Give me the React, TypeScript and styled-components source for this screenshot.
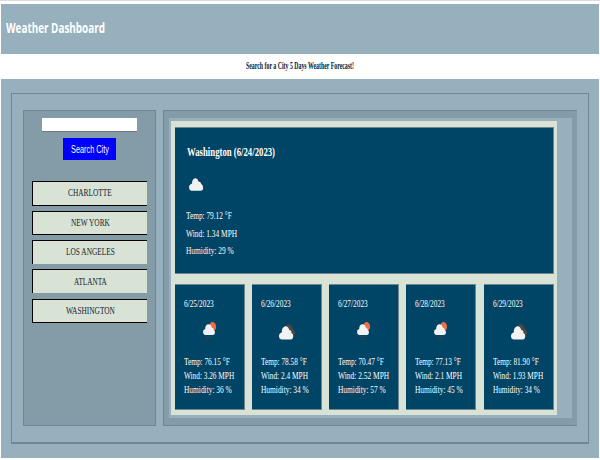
import React, { useLayoutEffect, useRef, useState } from "react";
import styled, { createGlobalStyle } from "styled-components";

const Global = createGlobalStyle`
  * { box-sizing: border-box; }
  body { margin: 0; background: #fff; font-family: "Liberation Serif", "Times New Roman", serif; }
`;

const Page = styled.div`
  width: 600px;
  height: 460px;
  padding: 3px 1px 2px;
  border-top: 1px solid #dcdce0;
  overflow: hidden;
`;
const Header = styled.header`
  height: 50px;
  background: #96b0be;
  padding: 15px 0 0 5px;
  color: #fff;
`;
const Tagline = styled.div`
  height: 25px;
  padding: 6px 0 0 245px;
  color: #00243c;
`;
const Main = styled.main`
  height: 379px;
  background: #96b0be;
  padding: 14px 10px;
`;
const Frame = styled.div`
  height: 351px;
  border: 1px solid #6f8793;
  border-bottom-width: 2px;
  padding: 16px 11px 16px;
  display: flex;
  gap: 7px;
`;
const Sidebar = styled.aside`
  width: 133px;
  height: 316px;
  background: #849ca8;
  border: 1px solid #6f8793;
  padding: 7px 8px 0;
`;
const Results = styled.section`
  width: 414px;
  height: 316px;
  background: #849ca8;
  border: solid #6f8793;
  border-width: 1px 0 1px 1px;
  padding: 7px 5px 7px 5px;
`;
const ResultsInner = styled.div`
  height: 300px;
  background: #96b0be;
  padding: 3px 15px 3px 2px;
`;
const Board = styled.div`
  height: 294px;
  background: #d8e3d6;
  padding: 6px 3px 5px 4px;
`;
const Panel = styled.article`
  background: #004466;
  border: solid #6f8793;
  border-width: 1px 1px 1px 0;
`;
const Today = styled(Panel)`
  height: 147px;
  padding: 16px 0 0 11px;
`;
const TodayTitle = styled.div`
  padding-left: 1px;
`;
const TodayIcon = styled.div`
  height: 47px;
  padding: 18px 0 0 3px;
`;
const Forecast = styled.div`
  display: grid;
  grid-template-columns: 70px 70px 70px 70px 71px;
  column-gap: 7px;
  margin-top: 10px;
`;
const Day = styled(Panel)`
  width: 70px;
  height: 126px;
  justify-self: end;
  padding: 12px 0 0 9px;
`;
const DayIcon = styled.div<{ $rain: boolean }>`
  height: 44px;
  padding: ${(p) => (p.$rain ? "11px 0 0 19px" : "13px 0 0 18px")};
`;
const Input = styled.input`
  display: block;
  width: 95px;
  height: 14px;
  margin: 0 0 6px 10px;
  padding: 0 4px;
  border: 0;
  border-bottom: 1px solid #6f7780;
  border-radius: 0;
  background: #fff;
  outline: none;
`;
const SearchButton = styled.button`
  display: flex;
  width: 53px;
  height: 22px;
  margin: 0 0 21px 31px;
  padding: 3px 0 0 8px;
  border: 0;
  background: #0000ff;
  color: #fff;
`;
const Cities = styled.div`
  display: grid;
  grid-template-rows: 25px 24px 24px 25px 24px;
  row-gap: 5px;
  align-items: start;
`;
const City = styled.button<{ $open: boolean; $h: number; $top: number }>`
  display: flex;
  justify-content: center;
  width: 115px;
  height: ${(p) => p.$h}px;
  padding: ${(p) => p.$top}px 0 0;
  border: solid #000;
  border-width: ${(p) => (p.$open ? "1px 0 0 1px" : "1px 0 1px 1px")};
  background: #d8e3d6;
  color: #17242e;
`;
const Box = styled.span<{ $w: number; $h: number; $size: number; $bold?: boolean; $sans?: string }>`
  display: block;
  width: ${(p) => p.$w}px;
  height: ${(p) => p.$h}px;
  line-height: ${(p) => p.$h}px;
  font-size: ${(p) => p.$size}px;
  font-weight: ${(p) => (p.$bold ? 700 : 400)};
  font-family: ${(p) => (p.$sans ? `"${p.$sans}", sans-serif` : `"Liberation Serif", serif`)};
  white-space: nowrap;
`;
const Glyphs = styled.span`
  display: inline-block;
  transform-origin: 0 50%;
`;
const Stats = styled.div`
  color: #fff;
`;

type TextProps = { text: string; w: number; h?: number; size?: number; bold?: boolean; sans?: string };

/* Condenses a line of text to the width of its box. */
function Condensed({ text, w, h = 14, size = 10.5, bold, sans }: TextProps) {
  const ref = useRef<HTMLSpanElement>(null);
  const [scale, setScale] = useState(1);
  useLayoutEffect(() => {
    if (ref.current) setScale(w / ref.current.offsetWidth);
  }, [w, text]);
  return (
    <Box $w={w} $h={h} $size={size} $bold={bold} $sans={sans}>
      <Glyphs ref={ref} style={{ transform: `scaleX(${scale})` }}>{text}</Glyphs>
    </Box>
  );
}

const Svg = styled.svg`
  display: block;
`;

function Cloud() {
  return (
    <Svg width="15" height="13" viewBox="0 0 15 13">
      <path d="M2.5 12.7Q0 12 0 9.5Q0 6.5 3 5.5Q3 1 6 .2Q8.5 0 9.5 3.5Q12 3.5 12.3 6Q14.2 7 14.2 10Q14.2 12.5 12 12.7Z" fill="#f2f2f2" />
    </Svg>
  );
}
function BrokenClouds() {
  return (
    <Svg width="17" height="16" viewBox="0 0 17 16">
      <path d="M6 4Q7 0 10 .2Q12.5.5 13 3Q14.5 4 14.5 6Q16.5 7 16.5 9Q16 11.5 13 12L8 8Z" fill="#484848" />
      <path d="M2.5 15.5Q0 15 0 12Q0 9 2.8 8.5Q2.5 4 5.5 2.5Q9 1.5 10.2 6Q12.5 6 12.5 9Q14.5 10 14.3 12.5Q14 15 12 15.5Z" fill="#f2f2f2" />
    </Svg>
  );
}
function RainCloud() {
  return (
    <Svg width="14" height="19" viewBox="0 0 14 19">
      <ellipse cx="9.6" cy="4.8" rx="3.5" ry="4.7" fill="#ec6e4c" />
      <path d="M2 13Q0 12.5 0 10Q0 7.5 2.2 7Q2.2 3 5 2.2Q8 2 8.7 5.5Q10.6 5.6 10.8 8Q12 8.7 12 10.6Q12 12.8 10 13Z" fill="#f2f2f2" />
      <path d="M3.5 14v1M6 14v1.5M8.5 14v1M4.5 16.5v1M7.5 16.5v1" stroke="#484848" strokeWidth="1" />
    </Svg>
  );
}

const cities = [
  { name: "CHARLOTTE", w: 43.5, h: 25, top: 4 },
  { name: "NEW YORK", w: 39, h: 24, top: 4 },
  { name: "LOS ANGELES", w: 49, h: 24, top: 4, open: true },
  { name: "ATLANTA", w: 33, h: 24, top: 5, open: true },
  { name: "WASHINGTON", w: 49, h: 24, top: 4 },
];

const days = [
  { date: "6/25/2023", rain: true, temp: "76.15", wind: "3.26", hum: 36, tw: 46, ww: 50, hw: 48 },
  { date: "6/26/2023", rain: false, temp: "78.58", wind: "2.4", hum: 34, tw: 46, ww: 47, hw: 48 },
  { date: "6/27/2023", rain: true, temp: "70.47", wind: "2.52", hum: 57, tw: 46, ww: 51, hw: 48 },
  { date: "6/28/2023", rain: true, temp: "77.13", wind: "2.1", hum: 45, tw: 46, ww: 47, hw: 48 },
  { date: "6/29/2023", rain: false, temp: "81.90", wind: "1.93", hum: 34, tw: 46, ww: 50, hw: 47 },
];

export default function App() {
  return (
    <Page>
      <Global />
      <Header>
        <Condensed text="Weather Dashboard" w={99} h={18} size={14} bold sans="Open Sans" />
      </Header>
      <Tagline>
        <Condensed text="Search for a City 5 Days Weather Forecast!" w={108} h={12} size={10} bold />
      </Tagline>
      <Main>
        <Frame>
          <Sidebar>
            <Input aria-label="City" />
            <SearchButton>
              <Condensed text="Search City" w={38} h={16} size={11} sans="Liberation Sans" />
            </SearchButton>
            <Cities>
              {cities.map((c) => (
                <City key={c.name} $open={!!c.open} $h={c.h} $top={c.top}>
                  <Condensed text={c.name} w={c.w} h={13} />
                </City>
              ))}
            </Cities>
          </Sidebar>
          <Results>
            <ResultsInner>
              <Board>
                <Today>
                  <Stats>
                    <TodayTitle>
                      <Condensed text="Washington (6/24/2023)" w={88} h={16} size={12} bold />
                    </TodayTitle>
                    <TodayIcon><Cloud /></TodayIcon>
                    <Condensed text="Temp: 79.12 °F" w={46} h={17.5} />
                    <Condensed text="Wind: 1.34 MPH" w={51} h={17.5} />
                    <Condensed text="Humidity: 29 %" w={48} h={17.5} />
                  </Stats>
                </Today>
                <Forecast>
                  {days.map((d) => (
                    <Day key={d.date}>
                      <Stats>
                        <Condensed text={d.date} w={30} />
                        <DayIcon $rain={d.rain}>{d.rain ? <RainCloud /> : <BrokenClouds />}</DayIcon>
                        <Condensed text={`Temp: ${d.temp} °F`} w={d.tw} />
                        <Condensed text={`Wind: ${d.wind} MPH`} w={d.ww} />
                        <Condensed text={`Humidity: ${d.hum} %`} w={d.hw} />
                      </Stats>
                    </Day>
                  ))}
                </Forecast>
              </Board>
            </ResultsInner>
          </Results>
        </Frame>
      </Main>
    </Page>
  );
}
